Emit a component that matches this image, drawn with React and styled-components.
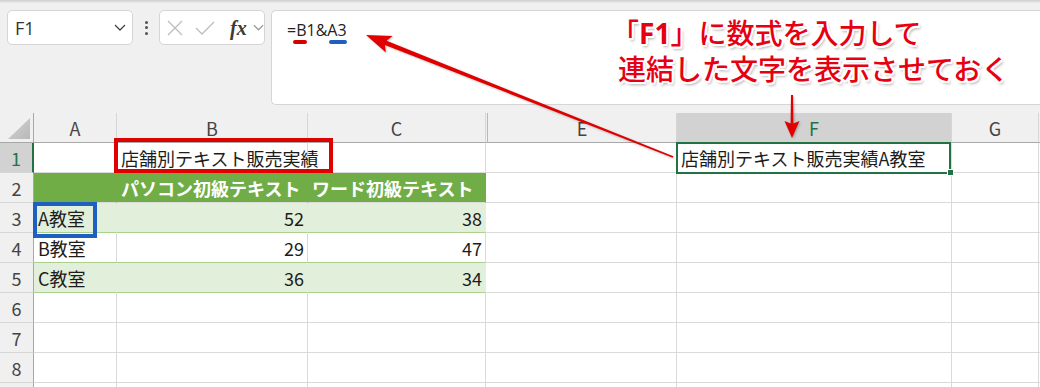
import React from 'react';
import styled, { createGlobalStyle } from 'styled-components';

const GlobalStyle = createGlobalStyle`
  html, body {
    margin: 0;
    padding: 0;
  }
  body {
    background: #f0f0f0;
    font-family: "Noto Sans CJK JP", "Noto Sans", sans-serif;
  }
`;

const Page = styled.div`
  position: relative;
  width: 1040px;
  height: 387px;
  overflow: hidden;
  background: #f0f0f0;
`;

const TopEdge = styled.div`
  height: 3px;
  background: linear-gradient(#cdcdcd, #ececec);
`;

const FormulaBar = styled.div`
  display: flex;
  align-items: flex-start;
  height: 102px;
  padding: 7px 0 0 7px;
  margin-bottom: 8px;
  box-sizing: border-box;
`;

const Field = styled.div`
  display: flex;
  align-items: center;
  box-sizing: border-box;
  height: 35px;
  background: #fff;
  border: 1px solid #d5d5d5;
  border-radius: 5px;
`;

const NameBox = styled(Field)`
  width: 126px;
  justify-content: space-between;
  padding: 0 6px 0 7px;
  font-family: "Open Sans", "Liberation Sans", sans-serif;
  font-size: 18px;
  color: #333;
`;

const Dots = styled.div`
  width: 26px;
  height: 35px;
  display: flex;
  flex-direction: column;
  align-items: center;
  justify-content: center;
  gap: 2.5px;

  span {
    width: 3px;
    height: 3px;
    border-radius: 50%;
    background: #505050;
  }
`;

const FxBox = styled(Field)`
  width: 106px;
  padding-left: 7px;
`;

const FxLabel = styled.span`
  margin: 0 6px 0 15px;
  font-family: "Liberation Serif", "DejaVu Serif", serif;
  font-style: italic;
  font-weight: bold;
  font-size: 20px;
  color: #3a3a3a;
  line-height: 1;
`;

const FormulaInput = styled.div`
  position: relative;
  flex: 1;
  box-sizing: border-box;
  height: 95px;
  margin-left: 6px;
  padding: 8px 0 0 15px;
  background: #fff;
  border: 1px solid #d5d5d5;
  border-right: none;
  border-radius: 5px 0 0 5px;
  font-family: "Open Sans", "Liberation Sans", sans-serif;
  font-size: 16px;
  color: #222;
`;

const Mark = styled.span`
  position: absolute;
  top: 29px;
  left: ${(p) => p.$left}px;
  width: ${(p) => p.$width}px;
  height: 4px;
  border-radius: 2px;
  background: ${(p) => p.$color};
`;

const Sheet = styled.div`
  display: grid;
  grid-template-columns: 34px 83px 191px 178px 2px 189px 275px 87px 1fr;
  grid-template-rows: 30px;
  grid-auto-rows: 30px;
  background: #fff;
`;

const HeadCell = styled.div`
  position: relative;
  box-sizing: border-box;
  display: flex;
  align-items: center;
  justify-content: center;
  font-size: 18px;
  color: ${(p) => (p.$selected ? '#217346' : '#444')};
  background: ${(p) => (p.$selected ? '#d2d2d2' : '#f0f0f0')};
`;

const Corner = styled(HeadCell)`
  align-items: flex-end;
  justify-content: flex-end;
  padding: 0 3px 3px 0;
  border-right: 1px solid #a8a8a8;
  border-bottom: 1px solid #a8a8a8;

  &::after {
    content: '';
    width: 22px;
    height: 21px;
    background: linear-gradient(135deg, #d4d4d4, #b8b8b8);
    clip-path: polygon(100% 0, 100% 100%, 0 100%);
  }
`;

const ColHead = styled(HeadCell)`
  border-right: 1px solid ${(p) => (p.$hidden ? '#b8b8b8' : '#d6d6d6')};
  border-bottom: 1px solid #a8a8a8;
`;

const RowHead = styled(HeadCell)`
  border-right: ${(p) => (p.$selected ? '2px solid #217346' : '1px solid #a8a8a8')};
  border-bottom: 1px solid #d6d6d6;
`;

const Cell = styled.div`
  position: relative;
  box-sizing: border-box;
  display: flex;
  align-items: center;
  justify-content: ${(p) => (p.$right ? 'flex-end' : 'flex-start')};
  padding: 0 3px 0 4px;
  white-space: nowrap;
  font-size: 18px;
  font-weight: ${(p) => (p.$bold ? 700 : 400)};
  color: ${(p) => (p.$bold ? '#fff' : '#1c1c1c')};
  background: ${(p) => p.$fill || 'transparent'};
  border-right: ${(p) => (p.$noGrid ? 'none' : `1px solid ${p.$fill || '#dadada'}`)};
  border-bottom: 1px solid ${(p) => p.$under || '#dadada'};
  z-index: ${(p) => (p.$active ? 2 : 'auto')};

  ${(p) =>
    p.$active &&
    `
    &::after {
      content: '';
      position: absolute;
      top: -1px;
      left: -1px;
      right: 0;
      bottom: -2px;
      border: 2px solid #217346;
    }
    &::before {
      content: '';
      position: absolute;
      right: -3px;
      bottom: -4px;
      width: 5px;
      height: 5px;
      background: #217346;
      border: 1px solid #fff;
      z-index: 1;
    }
  `}
`;

const Overlay = styled.svg`
  position: absolute;
  top: 0;
  left: 0;
  pointer-events: none;
  z-index: 5;
  filter: drop-shadow(1px 1px 1px rgba(0, 0, 0, 0.25));
`;

const Frame = styled.div`
  position: absolute;
  box-sizing: border-box;
  left: ${(p) => p.$x}px;
  top: ${(p) => p.$y}px;
  width: ${(p) => p.$w}px;
  height: ${(p) => p.$h}px;
  border: 4px solid ${(p) => p.$color};
  z-index: 4;
  pointer-events: none;
`;

const Callout = styled.div`
  position: absolute;
  left: 618px;
  top: 15px;
  z-index: 6;
  font-size: 28px;
  line-height: 35px;
  font-weight: 500;
  color: #e60012;
  white-space: nowrap;
  text-shadow: -1.5px -1.5px 0 #fff, 1.5px -1.5px 0 #fff, -1.5px 1.5px 0 #fff,
    1.5px 1.5px 0 #fff, 0 2px 0 #fff, 2px 0 0 #fff, 0 -2px 0 #fff, -2px 0 0 #fff,
    2px 3px 3px rgba(0, 0, 0, 0.35);
`;

const CalloutLine = styled.div`
  margin-left: ${(p) => p.$indent || 0}px;

  b {
    font-family: "Noto Sans", "Noto Sans CJK JP", sans-serif;
    font-weight: 700;
  }
`;

const arrowPoints = (x1, y1, x2, y2, head, half, w0, w1) => {
  const len = Math.hypot(x2 - x1, y2 - y1);
  const ux = (x2 - x1) / len;
  const uy = (y2 - y1) / len;
  const nx = -uy;
  const ny = ux;
  const bx = x2 - ux * head;
  const by = y2 - uy * head;
  const nbx = x2 - ux * head * 0.85;
  const nby = y2 - uy * head * 0.85;
  return [
    [x1 + nx * w0, y1 + ny * w0],
    [nbx + nx * w1, nby + ny * w1],
    [bx + nx * half, by + ny * half],
    [x2, y2],
    [bx - nx * half, by - ny * half],
    [nbx - nx * w1, nby - ny * w1],
    [x1 - nx * w0, y1 - ny * w0],
  ]
    .map(([x, y]) => `${x.toFixed(1)},${y.toFixed(1)}`)
    .join(' ');
};

const XIcon = () => (
  <svg width="16" height="16" viewBox="0 0 16 16">
    <path d="M1 1L15 15M15 1L1 15" stroke="#bdbdbd" strokeWidth="1.3" fill="none" />
  </svg>
);

const CheckIcon = () => (
  <svg width="20" height="14" viewBox="0 0 20 14" style={{ marginLeft: 12 }}>
    <path d="M1 7L7 13L19 1" stroke="#bdbdbd" strokeWidth="1.3" fill="none" />
  </svg>
);

const Chevron = ({ color = '#444', w = 12 }) => (
  <svg width={w} height="7" viewBox="0 0 12 7">
    <path d="M1 1L6 6L11 1" stroke={color} strokeWidth="1.3" fill="none" />
  </svg>
);

const columns = ['A', 'B', 'C', '', 'E', 'F', 'G', ''];

const GREEN = '#70ad47';
const LIGHT = '#e2efda';
const LINE = '#a9d08e';

const classRows = [
  { name: 'A教室', b: 52, c: 38, fill: LIGHT },
  { name: 'B教室', b: 29, c: 47 },
  { name: 'C教室', b: 36, c: 34, fill: LIGHT },
];

const Tail = ({ active, text }) => (
  <>
    <Cell $noGrid />
    <Cell />
    <Cell $active={active}>{text}</Cell>
    <Cell />
    <Cell />
  </>
);

export default function App() {
  return (
    <Page>
      <GlobalStyle />
      <TopEdge />
      <FormulaBar>
        <NameBox>
          <span>F1</span>
          <Chevron />
        </NameBox>
        <Dots>
          <span />
          <span />
          <span />
        </Dots>
        <FxBox>
          <XIcon />
          <CheckIcon />
          <FxLabel>fx</FxLabel>
          <Chevron color="#9a9a9a" w={11} />
        </FxBox>
        <FormulaInput>
          =B1&amp;A3
          <Mark $left={21} $width={14} $color="#d40000" />
          <Mark $left={57} $width={18} $color="#1f5fbf" />
        </FormulaInput>
      </FormulaBar>

      <Sheet>
        <Corner />
        {columns.map((c, i) => (
          <ColHead key={i} $selected={c === 'F'} $hidden={i === 3}>
            {c}
          </ColHead>
        ))}

        <RowHead $selected>1</RowHead>
        <Cell />
        <Cell>店舗別テキスト販売実績</Cell>
        <Cell />
        <Tail active text="店舗別テキスト販売実績A教室" />

        <RowHead>2</RowHead>
        <Cell $fill={GREEN} />
        <Cell $fill={GREEN} $bold>
          パソコン初級テキスト
        </Cell>
        <Cell $fill={GREEN} $bold>
          ワード初級テキスト
        </Cell>
        <Tail />

        {classRows.map((r, i) => (
          <React.Fragment key={r.name}>
            <RowHead>{i + 3}</RowHead>
            <Cell $fill={r.fill} $under={LINE}>
              {r.name}
            </Cell>
            <Cell $fill={r.fill} $under={LINE} $right>
              {r.b}
            </Cell>
            <Cell $fill={r.fill} $under={LINE} $right>
              {r.c}
            </Cell>
            <Tail />
          </React.Fragment>
        ))}

        {[6, 7, 8, null].map((n, i) => (
          <React.Fragment key={i}>
            <RowHead>{n}</RowHead>
            <Cell />
            <Cell />
            <Cell />
            <Tail />
          </React.Fragment>
        ))}
      </Sheet>

      <Frame $x={114} $y={138} $w={219} $h={35} $color="#e00000" />
      <Frame $x={33} $y={202} $w={64} $h={36} $color="#1f5fbf" />

      <Overlay width="1040" height="387" viewBox="0 0 1040 387">
        <polygon points={arrowPoints(673, 157, 366, 35, 25, 9, 0.8, 2.2)} fill="#e00000" />
        <polygon points={arrowPoints(792, 95, 792, 138, 17, 7.5, 1, 1.4)} fill="#e00000" />
      </Overlay>

      <Callout>
        <CalloutLine $indent={-7}>
          「<b>F1</b>」に数式を入力して
        </CalloutLine>
        <CalloutLine>連結した文字を表示させておく</CalloutLine>
      </Callout>
    </Page>
  );
}
